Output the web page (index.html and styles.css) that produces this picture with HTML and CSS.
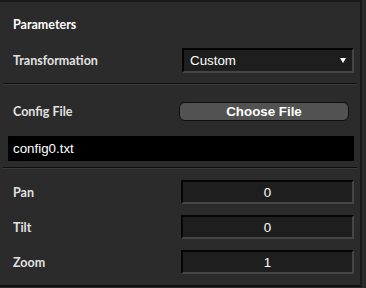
FILE: index.html
```html
<!DOCTYPE html>
<html lang="en">
    <head>
        <meta charset="UTF-8" />
        <meta name="viewport" content="width=device-width,initial-scale=1" />
        <title>Parameters</title>
        <link rel="stylesheet" href="styles.css">
    </head>
    <body>
        <main class="panel">
            <section class="group group-top">
                <div class="heading">Parameters</div>
                <div class="row">
                    <label class="label" for="transform">Transformation</label>
                    <div class="select-wrap">
                        <select id="transform" class="select">
                            <option>Custom</option>
                            <option>Identity</option>
                        </select>
                    </div>
                </div>
            </section>
            <hr class="sep" />
            <section class="group group-file">
                <div class="row">
                    <span class="label">Config File</span>
                    <button class="file-btn" type="button">Choose File</button>
                </div>
                <input class="file-name" type="text" value="config0.txt" readonly />
            </section>
            <hr class="sep" />
            <section class="group group-view">
                <div class="row">
                    <label class="label" for="pan">Pan</label>
                    <input id="pan" class="num" type="text" value="0" />
                </div>
                <div class="row">
                    <label class="label" for="tilt">Tilt</label>
                    <input id="tilt" class="num" type="text" value="0" />
                </div>
                <div class="row">
                    <label class="label" for="zoom">Zoom</label>
                    <input id="zoom" class="num" type="text" value="1" />
                </div>
            </section>
        </main>
    </body>
</html>
```

FILE: styles.css
```css
:root {
    --bg: #2b2b2b;
    --field: #1e1e1e;
    --dark: #050505;
    --edge: #454545;
    --label: #e2e2e2;
}
html,
body {
    margin: 0;
    background: var(--bg);
    -webkit-font-smoothing: antialiased;
}
.panel {
    width: 346px;
    padding: 0 6px 0 8px;
    border-top: 2px solid #1a1a1a;
    border-right: 2px solid #1a1a1a;
    border-bottom: 2px solid #111;
    font-family: Lato, "DejaVu Sans", sans-serif;
}
.group {
    display: flex;
    flex-direction: column;
}
.group-top {
    padding: 15px 0 10px 0;
    gap: 15px;
}
.group-file {
    padding: 17px 0 6px 0;
    gap: 15px;
}
.group-view {
    padding: 11px 0 11px 0;
    gap: 11px;
}
.heading {
    padding-left: 5px;
    font-size: 12.5px;
    font-weight: 700;
    line-height: 16px;
    color: #fff;
}
.row {
    display: grid;
    grid-template-columns: 1fr 173px;
    align-items: center;
}
.label {
    padding-left: 5px;
    font-size: 12.5px;
    font-weight: 700;
    color: var(--label);
}
.sep {
    margin: 0 -3px 0 -5px;
    height: 0;
    border: none;
    border-top: 1px solid #0e0e0e;
    border-bottom: 1px solid #3c3c3c;
}
.select-wrap {
    position: relative;
    margin-left: 1px;
}
.select-wrap::after {
    content: "";
    position: absolute;
    right: 8px;
    top: 10px;
    border-left: 3px solid transparent;
    border-right: 3px solid transparent;
    border-top: 5px solid #fff;
}
.select,
.num {
    box-sizing: border-box;
    width: 100%;
    height: 25px;
    margin: 0;
    background: var(--field);
    color: #fff;
    border-style: solid;
    border-width: 2px;
    border-color: var(--dark) var(--edge) var(--edge) var(--dark);
    font-family: "Liberation Sans", Arial, sans-serif;
    font-size: 13.33px;
    outline: none;
}
.select {
    appearance: none;
    -webkit-appearance: none;
    padding: 0 0 0 6px;
    border-radius: 0;
}
.num {
    height: 24px;
    text-align: center;
    padding: 0;
}
.file-btn {
    box-sizing: border-box;
    width: 170px;
    height: 19px;
    margin-left: -2px;
    padding: 0;
    background: #525252;
    color: #fff;
    border: 1px solid #111;
    border-radius: 6px;
    font-family: "Liberation Sans", Arial, sans-serif;
    font-size: 13.33px;
    font-weight: 700;
    cursor: pointer;
}
.file-name {
    box-sizing: border-box;
    width: 346px;
    height: 25px;
    margin: 0;
    padding: 0 5px;
    background: #000;
    color: #fff;
    border: none;
    font-family: "Liberation Sans", Arial, sans-serif;
    font-size: 13.33px;
    outline: none;
}
```
